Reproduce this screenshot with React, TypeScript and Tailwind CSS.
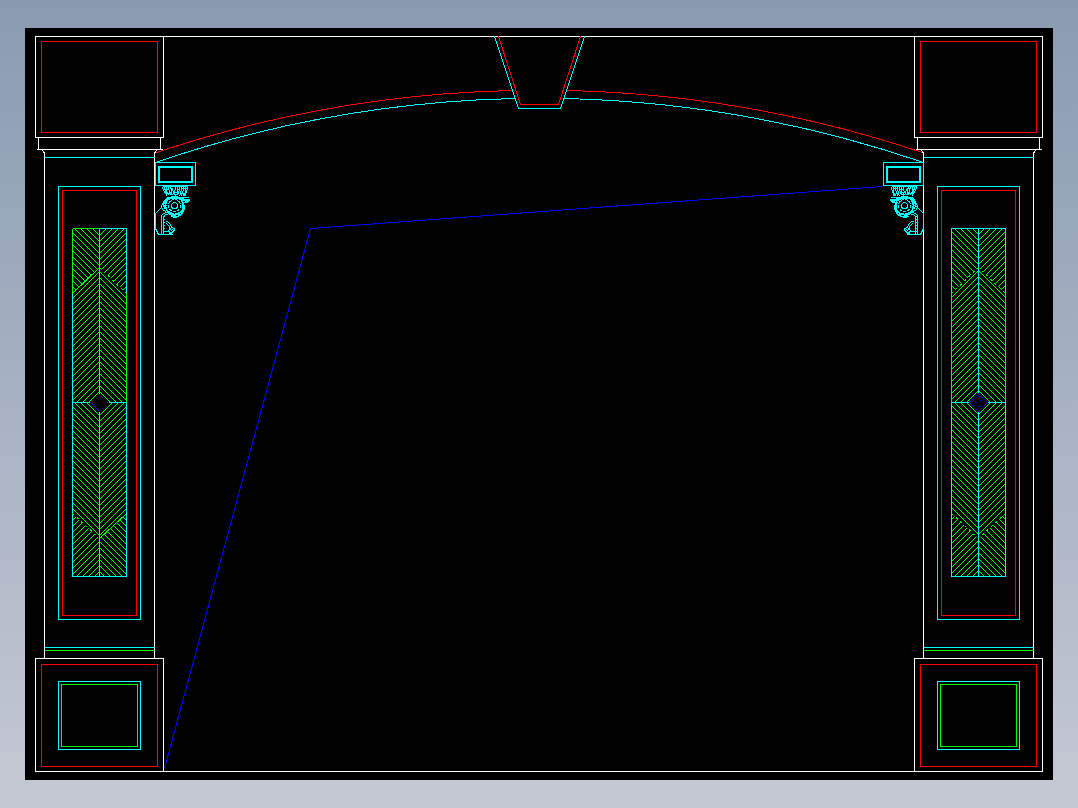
const WHITE = "#ffffff";
const RED = "#ff0000";
const CYAN = "#00ffff";
const GREEN = "#00ff00";
const BLUE = "#0000ff";

type Box = [number, number, number, number];

function Rect({ box, color, width = 1 }: { box: Box; color: string; width?: number }) {
  const [x0, y0, x1, y1] = box;
  return <rect x={x0} y={y0} width={x1 - x0} height={y1 - y0} stroke={color} strokeWidth={width} />;
}

function Line({ d, color, dash }: { d: string; color: string; dash?: string }) {
  return <path d={d} stroke={color} strokeDasharray={dash} />;
}

// 45 degree hatch lines across a box, dir 1 = "\", dir -1 = "/"
function hatchPath(x0: number, x1: number, y0: number, y1: number, dir: number, phase: number) {
  const h = y1 - y0;
  const w = x1 - x0;
  const step = 6;
  let d = "";
  for (let o = -w - h + phase; o < h + w; o += step) {
    if (dir > 0) d += `M${x0} ${y0 + o}L${x1} ${y0 + o + w}`;
    else d += `M${x0} ${y0 + o + w}L${x1} ${y0 + o}`;
  }
  return d;
}

function HatchPanel({ id, cx, colors }: { id: string; cx: number; colors: "left" | "right" }) {
  const l = cx - 27;
  const r = cx + 27;
  const shift = colors === "left" ? 1 : 0;
  const areas = [
    { pts: `${l},228 ${cx},228 ${cx},267 ${l},293`, x0: l, x1: cx, dir: 1 },
    { pts: `${l},293 ${cx},267 ${cx},393 ${cx - 9},402 ${l},402`, x0: l, x1: cx, dir: -1 },
    { pts: `${l},402 ${cx - 9},402 ${cx},411 ${cx},538 ${l},513`, x0: l, x1: cx, dir: 1 },
    { pts: `${l},513 ${cx},538 ${cx},576 ${l},576`, x0: l, x1: cx, dir: -1 },
    { pts: `${r},228 ${cx},228 ${cx},267 ${r},293`, x0: cx, x1: r, dir: -1 },
    { pts: `${r},293 ${cx},267 ${cx},393 ${cx + 9},402 ${r},402`, x0: cx, x1: r, dir: 1 },
    { pts: `${r},402 ${cx + 9},402 ${cx},411 ${cx},538 ${r},513`, x0: cx, x1: r, dir: -1 },
    { pts: `${r},513 ${cx},538 ${cx},576 ${r},576`, x0: cx, x1: r, dir: 1 },
  ];
  return (
    <g>
      {/* edges */}
      {colors === "left" ? (
        <>
          <Line d={`M${l} 228H${cx}`} color={GREEN} />
          <Line d={`M${cx} 228H${r}V292`} color={CYAN} />
          <Line d={`M${l} 228V293`} color={GREEN} />
          <Line d={`M${l} 293V576H${r}V402`} color={CYAN} />
          <Line d={`M${r} 292V402`} color={GREEN} />
        </>
      ) : (
        <>
          <Line d={`M${l} 292V228H${r}V292`} color={CYAN} />
          <Line d={`M${l} 292V402M${r} 292V402`} color={GREEN} />
          <Line d={`M${l} 402V576H${r}V402`} color={CYAN} />
        </>
      )}
      <Line d={`M${cx} 228V393M${cx} 411V576M${l} 402H${cx - 9}M${cx + 9} 402H${r}`} color={CYAN} />

      {/* hatch */}
      {areas.map((a, i) => (
        <g key={i}>
          <clipPath id={`${id}-${i}`}>
            <polygon points={a.pts} />
          </clipPath>
          <g clipPath={`url(#${id}-${i})`}>
            <path d={hatchPath(a.x0, a.x1, 228, 576, a.dir, (i % 2 ? 3 : 0) + shift)} stroke={GREEN} />
          </g>
        </g>
      ))}

      {/* chevrons, solid on one side of the left panel only */}
      {colors === "left" ? (
        <>
          <Line d={`M${l} 293L${cx} 267`} color={GREEN} />
          <Line d={`M${cx} 267L${r} 293`} color={GREEN} dash="2 4" />
          <Line d={`M${l} 513L${cx} 538`} color={GREEN} dash="2 4" />
          <Line d={`M${cx} 538L${r} 513`} color={GREEN} />
        </>
      ) : (
        <>
          <Line d={`M${l} 293L${cx} 267L${r} 293`} color={GREEN} dash="2 4" />
          <Line d={`M${l} 513L${cx} 538L${r} 513`} color={GREEN} dash="2 4" />
        </>
      )}

      {/* diamond */}
      {colors === "left" ? (
        <Line d={`M${cx - 9} 402L${cx} 411`} color={BLUE} />
      ) : (
        <>
          <Line d={`M${cx - 9} 402L${cx} 393L${cx + 9} 402L${cx} 411Z`} color={BLUE} dash="3 1" />
          <Line d={`M${cx - 4} 402H${cx - 2}M${cx + 1} 400H${cx + 3}M${cx - 1} 396H${cx + 1}M${cx - 1} 406H${cx + 1}`} color={BLUE} />
        </>
      )}
    </g>
  );
}

function Bracket() {
  return (
    <g stroke={CYAN}>
      <rect x={155} y={162} width={40} height={23} />
      <rect x={158.5} y={166.5} width={33} height={15} strokeWidth={2} />
      {/* leaves */}
      <path d="M162 186c0 3 1 5 3 7l2 3M164 186c0 3 1 6 3 8M166 186c-1 3 0 6 3 9M168 186c0 3 1 6 3 9M170 187c1 3 1 6 2 8M172 189l2 6M175 187c-1 3-1 6 0 9M177 186c0 4 0 7-1 9M179 186c0 4-1 7-2 9M181 186c0 4-1 7-2 10M183 186c0 4-1 8-3 10M185 186c1 4-1 8-3 10M187 186c0 4-1 7-3 10" />
      <path d="M162 186h25M163 189h4M169 188h3M176 189h3M181 188h5M167 193h3M174 192h3M180 193h3" />
      {/* head */}
      <path d="M166 197h16M165 198h18M164 199h5M178 199h7M180 200h9M181 197h7M183 199h6M184 201h4M181 202h6" />
      {/* scroll */}
      <circle cx={174} cy={205} r={9} strokeWidth={1.6} />
      <circle cx={174} cy={205} r={6} strokeDasharray="3 1" />
      <circle cx={174} cy={205} r={3} />
      <path d="M168 198l-4 2-2 3-1 3 1 3 3 2 2 2M165 200l-2 4 1 5M163 205h3M164 202h2M164 208h2M182 204l1 5-2 4-4 3-4 0M184 204l0 5-3 5-5 3M180 211h3M176 214h4M168 213l3 2h4M170 216h6M162 206h2M166 211h3M172 217h4" />
      {/* hook */}
      <path d="M161 233V215l2-2 3-1 5 0M163 233V216l2-2 6-1M162 216h2M162 219h2M162 222h2M162 225h2M162 228h2M162 231h2" />
      <path d="M165 221h2l3 3 1 3 3 1 0 2-2 1-1 2-2-1-1-2M166 223l3 3 0 3M170 228l1 3M172 229l1 1" />
      <path d="M160 208l-5 5v15l3 6h14" />
      <path d="M163 231h6v3" />
    </g>
  );
}

function Column({ x }: { x: number }) {
  // x = left edge of the outer box, boxes are 128 wide
  const r = x + 128;
  return (
    <g>
      <Rect box={[x, 36, r, 137]} color={WHITE} />
      <Rect box={[x + 6, 41, r - 6, 132]} color={RED} />
      <Line d={`M${x + 3} 137V149M${r - 3} 137V149`} color={WHITE} />
      <Line d={`M${x + 1} 149H${r - 1}`} color={WHITE} />
      <Line d={`M${x + 6} 149l2 2l1 2V658M${r - 6} 149l-2 2l-1 2V658`} color={WHITE} />
      <Line d={`M${x + 9} 157H${r - 9}`} color={CYAN} />
      <Line d={`M${x + 9} 647H${r - 9}`} color={CYAN} />
      <Line d={`M${x + 9} 650H${r - 9}`} color={GREEN} />
      <Rect box={[x + 23, 186, r - 23, 619]} color={CYAN} />
      <Rect box={[x + 27, 190, r - 27, 615]} color={RED} />

      <Rect box={[x, 658, r, 771]} color={WHITE} />
      <Rect box={[x + 6, 664, r - 6, 766]} color={RED} />
      <Rect box={[x + 23, 681, r - 23, 749]} color={CYAN} />
      <Rect box={[x + 26, 684, r - 26, 746]} color={GREEN} />
    </g>
  );
}

export default function App() {
  return (
    <div className="w-[1078px] h-[808px] overflow-hidden bg-linear-to-b from-[#8a9bb1] to-[#c5c9d4] pt-[28px] pl-[25px]">
      <div className="w-[1028px] h-[752px] bg-black">
        <svg
          width={1028}
          height={752}
          viewBox="25 28 1028 752"
          fill="none"
          shapeRendering="crispEdges"
        >
          <g transform="translate(0.5 0.5)">
            <Line d="M163 36H914M163 771H914" color={WHITE} />

            <Column x={35} />
            <Column x={914} />

            {/* arch */}
            <Line d="M156 152A1205 1205 0 0 1 512 90" color={RED} />
            <Line d="M566 90A1205 1205 0 0 1 922 152" color={RED} />
            <Line d="M155 162A1193 1193 0 0 1 515 98" color={CYAN} />
            <Line d="M563 98A1193 1193 0 0 1 923 162" color={CYAN} />

            {/* keystone */}
            <Line d="M494 36L518 108H560L584 36" color={CYAN} />
            <Line d="M498 36L520 104H558L580 36" color={RED} />

            {/* construction line */}
            <Line d="M164 768L310 228L882 186" color={BLUE} />

            <Bracket />
            <g transform="translate(1078 0) scale(-1 1)">
              <Bracket />
            </g>

            <HatchPanel id="hl" cx={99} colors="left" />
            <HatchPanel id="hr" cx={978} colors="right" />
          </g>
        </svg>
      </div>
    </div>
  );
}
